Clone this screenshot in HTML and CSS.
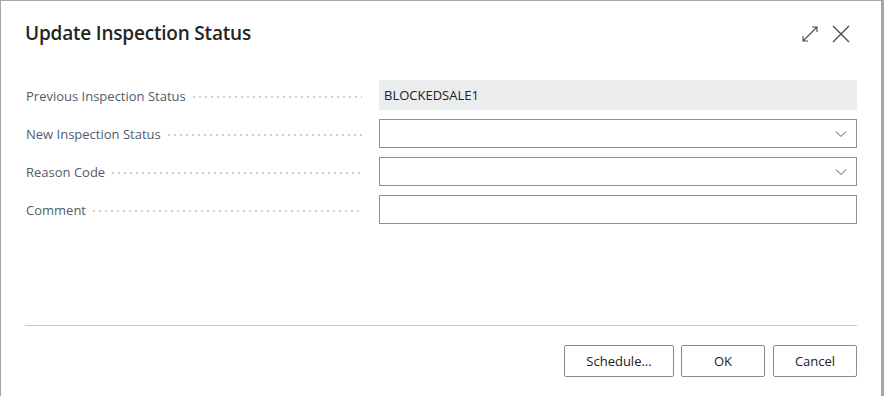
FILE: index.html
```html
<!DOCTYPE html>
<html lang="en">
<head>
    <meta charset="UTF-8">
    <title>Update Inspection Status</title>
    <link rel="stylesheet" href="styles.css">
</head>
<body>
    <div class="dialog">
        <div class="dialog-header">
            <h1>Update Inspection Status</h1>
            <div class="header-actions">
                <svg class="icon" width="18" height="18" viewBox="0 0 18 18">
                    <path d="M2 16 L16 2 M11 2 H16 V7 M2 11 V16 H7" fill="none" stroke="#4a4a4a" stroke-width="1.1"/>
                </svg>
                <svg class="icon" width="18" height="18" viewBox="0 0 18 18">
                    <path d="M1 1 L17 17 M17 1 L1 17" fill="none" stroke="#4a4a4a" stroke-width="1.3"/>
                </svg>
            </div>
        </div>

        <div class="form">
            <div class="field-row">
                <div class="label"><span>Previous Inspection Status</span><i class="leader"></i></div>
                <div class="input readonly">BLOCKEDSALE1</div>
            </div>
            <div class="field-row">
                <div class="label"><span>New Inspection Status</span><i class="leader"></i></div>
                <div class="input select">
                    <svg width="12" height="8" viewBox="0 0 12 8"><path d="M1 1.5 L6 6.5 L11 1.5" fill="none" stroke="#555" stroke-width="1"/></svg>
                </div>
            </div>
            <div class="field-row">
                <div class="label"><span>Reason Code</span><i class="leader"></i></div>
                <div class="input select">
                    <svg width="12" height="8" viewBox="0 0 12 8"><path d="M1 1.5 L6 6.5 L11 1.5" fill="none" stroke="#555" stroke-width="1"/></svg>
                </div>
            </div>
            <div class="field-row">
                <div class="label"><span>Comment</span><i class="leader"></i></div>
                <div class="input"></div>
            </div>
        </div>

        <div class="dialog-footer">
            <button>Schedule...</button>
            <button class="ok">OK</button>
            <button class="cancel">Cancel</button>
        </div>
    </div>
</body>
</html>
```

FILE: styles.css
```css
body {
    margin: 0;
    padding: 1px 0 0 1px;
    background-color: #a6a6a6;
    font-family: 'Open Sans', 'Noto Sans', sans-serif;
    color: #212121;
    overflow: hidden;
}

.dialog {
    width: 880px;
    height: 395px;
    background-color: #ffffff;
    box-sizing: border-box;
    padding: 0 24px 0 24px;
}

.dialog-header {
    display: flex;
    justify-content: space-between;
    align-items: center;
    height: 64px;
}

h1 {
    margin: 0;
    font-size: 19px;
    font-weight: 600;
    color: #252525;
    letter-spacing: -0.2px;
}

.header-actions {
    display: flex;
    gap: 13px;
    margin-right: 7px;
    margin-top: 1px;
}

.form {
    padding-top: 16px;
    display: flex;
    flex-direction: column;
    gap: 9px;
}

.field-row {
    display: grid;
    grid-template-columns: 354px 478px;
    height: 29px;
}

.label {
    display: flex;
    align-items: center;
    padding-left: 1px;
    padding-right: 17px;
    padding-top: 1px;
    font-size: 13px;
    color: #505c6d;
}

.leader {
    flex: 1;
    height: 4px;
    margin-left: 7px;
    margin-top: 2px;
    background-image: radial-gradient(circle at 1px 2px, #cdcdcd 0.9px, transparent 1.3px);
    background-size: 6px 4px;
    background-repeat: repeat-x;
}

.input {
    box-sizing: border-box;
    border: 1px solid #8a8f98;
    display: flex;
    align-items: center;
    padding-left: 5px;
    font-size: 13px;
    background: #ffffff;
}

.readonly {
    border: none;
    background-color: #ebecee;
    height: 30px;
    margin-top: -1px;
}

.select {
    justify-content: flex-end;
    padding-right: 9px;
}

.dialog-footer {
    margin-top: 101px;
    border-top: 1px solid #c8c8c8;
    display: flex;
    justify-content: flex-end;
    gap: 7px;
    padding-top: 19px;
    width: 832px;
}

.dialog-footer button {
    height: 32px;
    width: 110px;
    background: #ffffff;
    border: 1px solid #8a8a8a;
    border-radius: 2px;
    font-family: 'Open Sans', 'Noto Sans', sans-serif;
    font-size: 13px;
    color: #212121;
}

.dialog-footer .ok {
    width: 84px;
}

.dialog-footer .cancel {
    width: 84px;
    margin-left: 1px;
}
```
